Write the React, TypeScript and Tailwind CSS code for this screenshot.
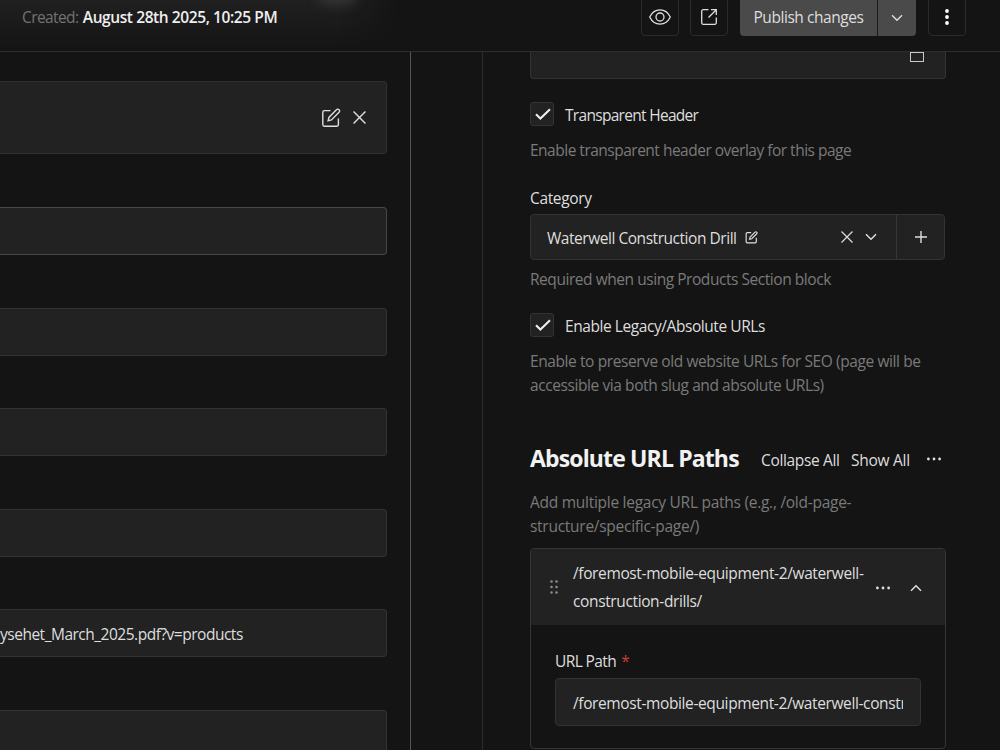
import type { ReactNode } from "react";
import { clsx } from "clsx";

function EditIcon({ className }: { className?: string }) {
  return (
    <svg viewBox="0 0 20 20" fill="none" stroke="currentColor" className={className}>
      <path d="M9.5 2.6H3.4a1.6 1.6 0 0 0-1.6 1.6v12.4a1.6 1.6 0 0 0 1.6 1.6h12.4a1.6 1.6 0 0 0 1.6-1.6v-6.1" />
      <path d="M15.4 1.7a1.75 1.75 0 0 1 2.6 0 1.75 1.75 0 0 1 0 2.6l-7.6 7.6-3.3.8.8-3.3z" />
    </svg>
  );
}

function XIcon({ className }: { className?: string }) {
  return (
    <svg viewBox="0 0 12 12" fill="none" stroke="currentColor" className={className}>
      <path d="M.5.5l11 11M11.5.5l-11 11" />
    </svg>
  );
}

function ChevronIcon({ className }: { className?: string }) {
  return (
    <svg viewBox="0 0 12 8" fill="none" stroke="currentColor" className={className}>
      <path d="M1 1.2l5 5 5-5" />
    </svg>
  );
}

function MoreIcon({ className }: { className?: string }) {
  return (
    <svg viewBox="0 0 16 4" fill="currentColor" className={className}>
      <circle cx="2.4" cy="2" r="1.4" />
      <circle cx="8" cy="2" r="1.4" />
      <circle cx="13.6" cy="2" r="1.4" />
    </svg>
  );
}

function DragIcon({ className }: { className?: string }) {
  return (
    <svg viewBox="0 0 10 16" fill="currentColor" className={className}>
      {[2.5, 8, 13.5].map((y) => (
        <g key={y}>
          <circle cx="2.5" cy={y} r="1.3" />
          <circle cx="7.5" cy={y} r="1.3" />
        </g>
      ))}
    </svg>
  );
}

function IconButton({ children }: { children: ReactNode }) {
  return (
    <button className="flex h-[39px] w-[38px] items-center justify-center rounded-[4px] border border-[#2b2b2b] text-[#dedede]">
      {children}
    </button>
  );
}

function Header() {
  return (
    <header className="relative flex h-[52px] shrink-0 items-start overflow-hidden border-b border-[#2d2d2d]">
      <div className="absolute top-0 left-0 h-full w-[400px] bg-linear-to-b from-[#202020] to-[#141414] mask-r-from-85% mask-r-to-100%" />
      <div className="absolute -top-[10px] left-[318px] h-[14px] w-[38px] rounded-full bg-[#363636] blur-[6px]" />
      <p className="relative mt-[6px] ml-[22px] text-[15.5px] leading-[22px] whitespace-nowrap text-[#737373]">
        <span className="tracking-[-0.6px]">Created: </span>
        <span className="ml-px font-semibold tracking-[-0.41px] text-[#efefef]">August 28th 2025, 10:25 PM</span>
      </p>
      <div className="relative -mt-[3px] mr-[34px] ml-auto flex">
        <IconButton>
          <svg viewBox="0 0 22 16" fill="none" stroke="currentColor" strokeWidth="1.3" className="h-4 w-[22px]">
            <path d="M.7 8C3 3.3 6.7.9 11 .9S19 3.3 21.3 8C19 12.7 15.3 15.1 11 15.1S3 12.7.7 8z" />
            <circle cx="11" cy="8" r="4" />
          </svg>
        </IconButton>
        <div className="ml-[11px]">
          <IconButton>
            <svg viewBox="0 0 16 16" fill="none" stroke="currentColor" strokeWidth="1.3" className="h-4 w-4">
              <path d="M7.5.7H2.2A1.5 1.5 0 0 0 .7 2.2v11.6a1.5 1.5 0 0 0 1.5 1.5h11.6a1.5 1.5 0 0 0 1.5-1.5V8.5M10 .7h5.3V6M15.3.7L7.5 8.5" />
            </svg>
          </IconButton>
        </div>
        <div className="ml-3 flex h-[39px] overflow-hidden rounded-[4px] bg-[#4a4a4a] text-[#dedede]">
          <button className="w-[138px] border-r border-[#1b1b1b] pt-[3px] text-[15.5px] tracking-[-0.43px] whitespace-nowrap">
            Publish changes
          </button>
          <button className="flex w-[38px] items-center justify-center">
            <ChevronIcon className="mt-[2px] h-2 w-3 stroke-[1.4]" />
          </button>
        </div>
        <div className="ml-3">
          <IconButton>
            <svg viewBox="0 0 4 16" fill="white" className="mt-px h-4 w-1">
              <circle cx="2" cy="2" r="1.9" />
              <circle cx="2" cy="8" r="1.9" />
              <circle cx="2" cy="14" r="1.9" />
            </svg>
          </IconButton>
        </div>
      </div>
    </header>
  );
}

const FIELDS = [
  { id: "f1", active: true, value: "" },
  { id: "f2", active: false, value: "" },
  { id: "f3", active: false, value: "" },
  { id: "f4", active: false, value: "" },
  { id: "f5", active: false, value: "ysehet_March_2025.pdf?v=products" },
  { id: "f6", active: false, value: "" },
];

function MainColumn() {
  return (
    <main className="w-[411px] shrink-0 border-r border-[#555] pt-[29px] pr-[23px]">
      <div className="flex h-[73px] items-center justify-end rounded-r-[4px] border border-l-0 border-[#303030] bg-[#222] pr-[20px] text-[#dedede]">
        <EditIcon className="h-5 w-5 stroke-[1.4]" />
        <XIcon className="ml-[12px] h-[13px] w-[13px] stroke-[1.3]" />
      </div>
      <div className="mt-[53px] flex flex-col gap-[52.6px]">
        {FIELDS.map((field) => (
          <div
            key={field.id}
            className={clsx(
              "flex h-12 shrink-0 items-center rounded-r-[4px] border border-l-0 bg-[#222] pt-[3px] text-[15.5px] tracking-[-0.49px] whitespace-nowrap text-[#dedede]",
              field.active ? "border-[#484848]" : "border-[#333]"
            )}
          >
            {field.value}
          </div>
        ))}
      </div>
    </main>
  );
}

function Checkbox({ label, className }: { label: string; className?: string }) {
  return (
    <label className="flex h-6 items-center gap-[11px] whitespace-nowrap">
      <span className="flex h-6 w-6 items-center justify-center rounded-[3px] border border-[#333] bg-[#222] pl-px">
        <svg viewBox="0 0 16 12" fill="none" stroke="#eee" strokeWidth="2.1" className="h-3 w-4">
          <path d="M1 6.3l4.4 4.2L15 1.2" />
        </svg>
      </span>
      <span className={clsx("pt-[4px]", className)}>{label}</span>
    </label>
  );
}

function Description({ className, children }: { className?: string; children: ReactNode }) {
  return <p className={clsx("leading-6 whitespace-nowrap text-[#7a7a7a]", className)}>{children}</p>;
}

function Sidebar() {
  return (
    <aside className="ml-[71px] w-[518px] border-l border-[#2b2b2b] pr-[54px] pl-[47px] text-[15.5px] text-[#dedede]">
      <div className="flex h-[27px] items-start justify-end rounded-b-[4px] border border-t-0 border-[#333] bg-[#222] pr-[21px]">
        <div className="h-[10px] w-[14px] border border-[#cacaca]" />
      </div>
      <div className="mt-[23px]">
        <Checkbox label="Transparent Header" className="tracking-[-0.7px]" />
      </div>
      <Description className="mt-3 tracking-[-0.5px]">Enable transparent header overlay for this page</Description>

      <p className="mt-[24px] leading-6 tracking-[-0.36px]">Category</p>
      <div className="mt-[4px] mr-px flex h-[46px] rounded-[4px] border border-[#333] bg-[#222]">
        <div className="flex flex-1 items-center pl-4">
          <span className="pt-[4px] tracking-[-0.46px] whitespace-nowrap">Waterwell Construction Drill</span>
          <EditIcon className="ml-2 h-[13px] w-[13px] stroke-[1.8]" />
          <XIcon className="mr-3 ml-auto h-3 w-3 stroke-[1.2]" />
          <ChevronIcon className="mr-[19px] h-2 w-3 stroke-[1.5]" />
        </div>
        <button className="flex w-[48px] items-center justify-center border-l border-[#363636]">
          <svg viewBox="0 0 12 12" stroke="currentColor" strokeWidth="1.4" className="h-3 w-3">
            <path d="M6 0v12M0 6h12" />
          </svg>
        </button>
      </div>
      <Description className="mt-[7px] tracking-[-0.45px]">Required when using Products Section block</Description>

      <div className="mt-[22px]">
        <Checkbox label="Enable Legacy/Absolute URLs" className="tracking-[-0.43px]" />
      </div>
      <Description className="mt-3 tracking-[-0.41px]">
        Enable to preserve old website URLs for SEO (page will be
        <br />
        accessible via both slug and absolute URLs)
      </Description>

      <div className="mt-[45px] flex h-8 items-center whitespace-nowrap">
        <h2 className="w-[231px] text-[23px] font-bold tracking-[-0.86px] text-[#f2f2f2]">Absolute URL Paths</h2>
        <span className="w-[90px] pt-[6px] tracking-[-0.34px]">Collapse All</span>
        <span className="pt-[6px] tracking-[-0.27px]">Show All</span>
        <MoreIcon className="mt-0.5 mr-1 ml-auto h-1 w-4" />
      </div>
      <Description className="mt-4 tracking-[-0.27px]">
        Add multiple legacy URL paths (e.g., /old-page-
        <br />
        structure/specific-page/)
      </Description>

      <div className="mt-[10px] h-[201px] overflow-hidden rounded-[4px] border border-[#363636]">
        <div className="flex h-[76px] items-center bg-[#222] pr-[23px] pl-[18px]">
          <DragIcon className="h-4 w-[10px] text-[#8a8a8a]" />
          <p className="ml-[14px] leading-7 tracking-[-0.37px] whitespace-nowrap">
            /foremost-mobile-equipment-2/waterwell-
            <br />
            construction-drills/
          </p>
          <MoreIcon className="mt-px ml-auto h-1 w-4" />
          <ChevronIcon className="mt-px ml-[19px] h-2 w-3 rotate-180 stroke-[1.5]" />
        </div>
        <div className="px-6 pt-[24px]">
          <p className="leading-6 tracking-[-0.6px]">
            URL Path<span className="ml-[5px] text-[#c93c3c]">*</span>
          </p>
          <div className="mt-[5px] flex h-12 items-center rounded-[4px] border border-[#333] bg-[#222] px-[17px]">
            <input
              readOnly
              defaultValue="/foremost-mobile-equipment-2/waterwell-construction-drills/"
              className="w-full bg-transparent pt-[4px] tracking-[-0.38px] outline-none"
            />
          </div>
        </div>
      </div>
    </aside>
  );
}

export default function App() {
  return (
    <div className="flex h-[750px] w-[1000px] flex-col overflow-hidden bg-[#141414] font-['Open_Sans','Noto_Sans',sans-serif]">
      <Header />
      <div className="flex min-h-0 flex-1 overflow-hidden">
        <MainColumn />
        <Sidebar />
      </div>
    </div>
  );
}
